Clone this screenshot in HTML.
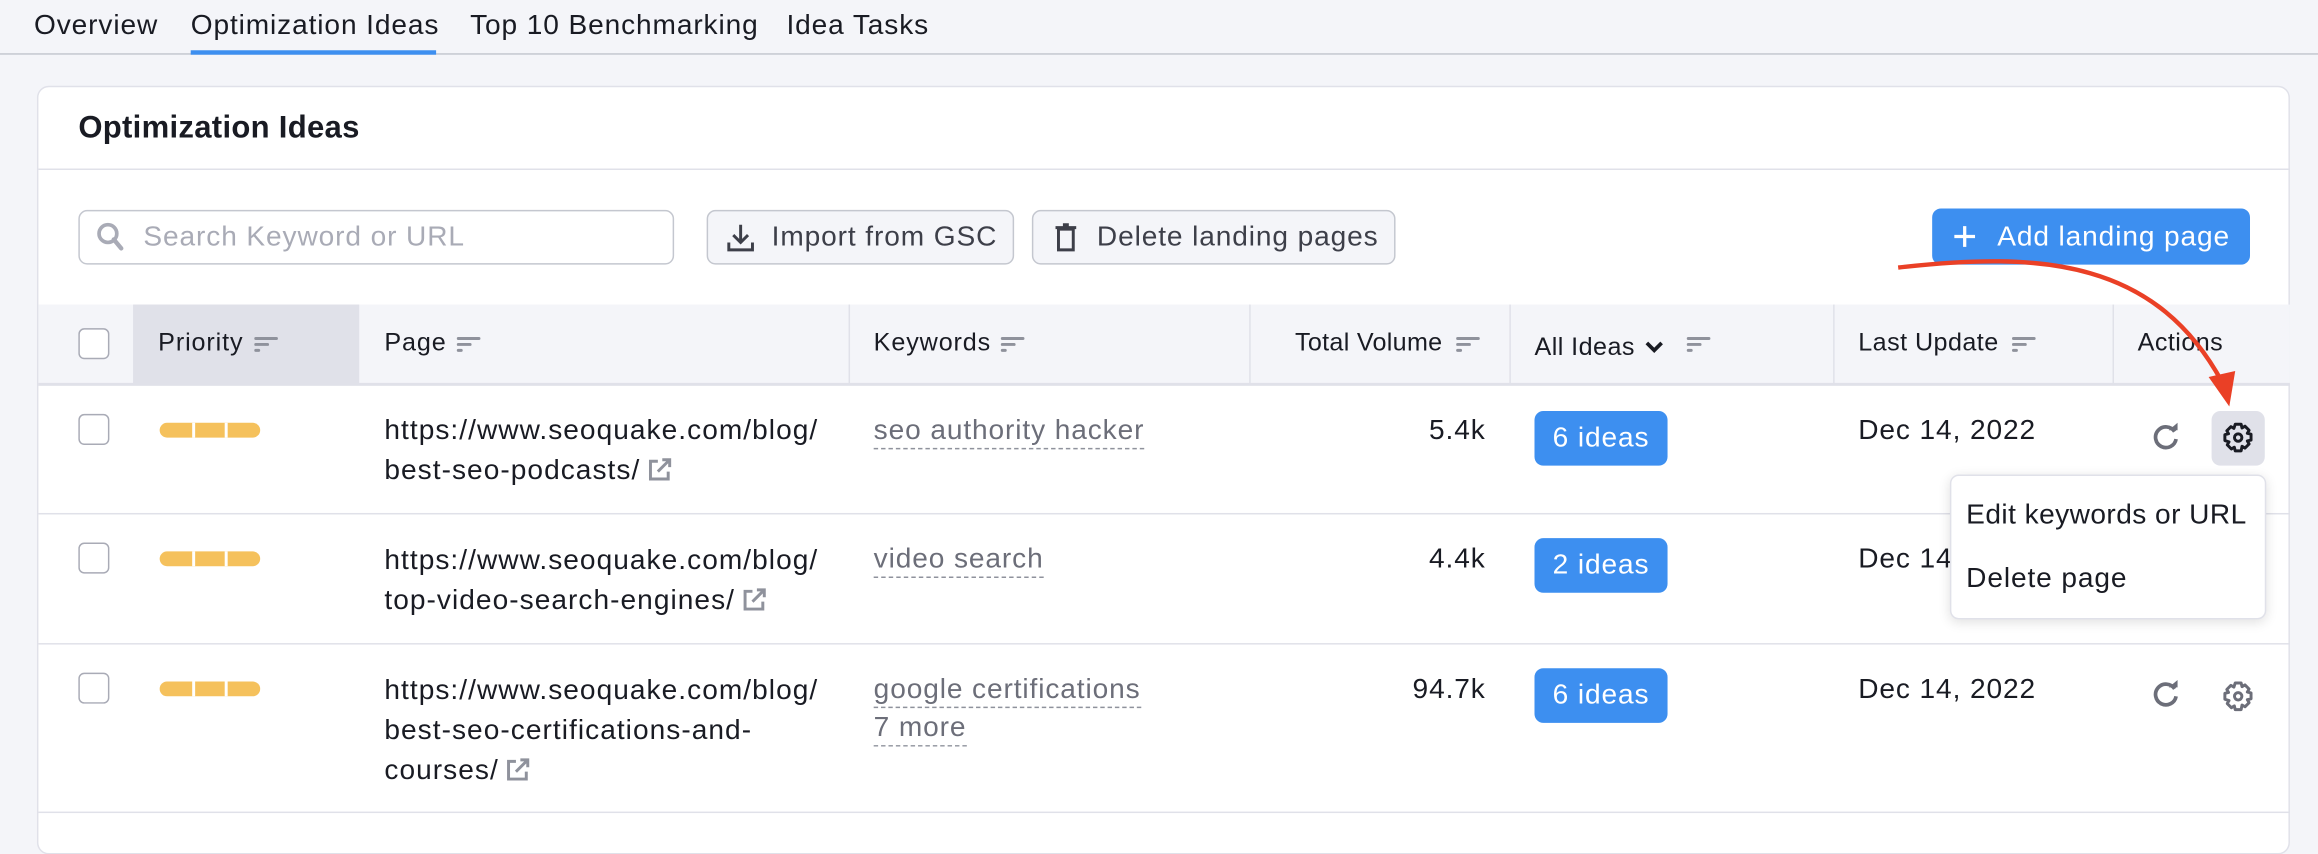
<!DOCTYPE html>
<html><head><meta charset="utf-8"><style>
*{box-sizing:border-box;margin:0;padding:0}
html,body{width:2318px;height:814px;overflow:hidden;background:#f4f5f9}
#w{position:absolute;left:0;top:0;width:1568px;height:551px;transform:scale(1.47832);transform-origin:0 0;font-family:"Liberation Sans",sans-serif;color:#191b23;letter-spacing:0.6px}
.a{position:absolute;white-space:nowrap}
.tab{font-size:19px;top:7px}
.card{position:absolute;left:25px;top:58px;width:1524px;height:520px;background:#fff;border:1px solid #e0e1e9;border-radius:8px}
.btn{position:absolute;top:142px;height:37px;border:1px solid #c4c7cf;border-radius:6px;background:#f4f5f9;font-size:19px;color:#3d3f49;line-height:35px}
.hdr{font-size:17px;top:222px;color:#191b23}
.sort{position:absolute;width:16px;height:12px}
.sort i{display:block;height:2px;background:#8f929c;margin-bottom:2px;border-radius:1px}
.vd{position:absolute;top:206px;width:1px;height:54px;background:#e0e1e9}
.hd{position:absolute;left:26px;width:1523px;height:1px;background:#e0e1e9}
.cb{position:absolute;left:53px;width:21px;height:21px;border:1px solid #a9abb6;border-radius:4px;background:#fff}
.pri{position:absolute;left:108px;width:68px;height:10px;background:#f5c15c;border-radius:5px}
.pri:before,.pri:after{content:"";position:absolute;top:0;width:2px;height:10px;background:#fff}
.pri:before{left:22px}.pri:after{left:44px}
.pg{font-size:19px;line-height:27px;left:260px;letter-spacing:0.7px}
.kw{font-size:19px;color:#6c6e79;left:591px;border-bottom:1px dashed #8f929c;line-height:22px}
.vol{font-size:19px;right:563px}
.badge{position:absolute;left:1038px;width:90px;height:37px;background:#3d8ff0;border-radius:6px;color:#fff;font-size:19px;text-align:center;line-height:37px}
.dt{font-size:19px;left:1257px}
.ext{display:inline-block;vertical-align:-3px;margin-left:4px}
</style></head><body><div id="w">
<div class="a tab" style="left:23px">Overview</div>
<div class="a tab" style="left:129px">Optimization Ideas</div>
<div class="a tab" style="left:318px">Top 10 Benchmarking</div>
<div class="a tab" style="left:532px">Idea Tasks</div>
<div style="position:absolute;left:0;top:36px;width:1568px;height:1px;background:#c4c7cf"></div>
<div style="position:absolute;left:129px;top:34px;width:166px;height:3px;background:#3d8ff0"></div>
<div class="card"></div>
<div class="a" style="left:53px;top:75px;font-size:21px;font-weight:bold;letter-spacing:0.2px">Optimization Ideas</div>
<div class="hd" style="top:114px"></div>
<div style="position:absolute;left:53px;top:142px;width:403px;height:37px;border:1px solid #c4c7cf;border-radius:6px;background:#fff"></div>
<svg class="a" style="left:64px;top:150px" width="22" height="22" viewBox="0 0 22 22"><circle cx="9" cy="8" r="6" fill="none" stroke="#a9abb6" stroke-width="2.5"/><path d="M13 12l5 6" stroke="#a9abb6" stroke-width="3" stroke-linecap="round"/></svg>
<div class="a" style="left:97px;top:150px;font-size:19px;color:#a9abb6">Search Keyword or URL</div>
<div class="btn" style="left:478px;width:208px;padding-left:43px">Import from GSC</div>
<svg class="a" style="left:490px;top:150px" width="22" height="22" viewBox="0 0 22 22"><path d="M11 2v12M6 9l5 5 5-5M3 14v5h16v-5" fill="none" stroke="#3d3f49" stroke-width="2"/></svg>
<div class="btn" style="left:698px;width:246px;padding-left:43px">Delete landing pages</div>
<svg class="a" style="left:710px;top:149px" width="22" height="22" viewBox="0 0 22 22"><path d="M6 6h10v14H6zM4 5h14M9 3h4" fill="none" stroke="#3d3f49" stroke-width="2"/></svg>
<div style="position:absolute;left:1307px;top:141px;width:215px;height:38px;background:#3d8ff0;border-radius:6px;color:#fff;font-size:19px;line-height:39px;padding-left:44px">Add landing page</div>
<svg class="a" style="left:1321px;top:152px" width="16" height="16" viewBox="0 0 16 16"><path d="M8 1v14M1 8h14" stroke="#fff" stroke-width="2.2"/></svg>
<div style="position:absolute;left:26px;top:206px;width:1523px;height:54px;background:#f4f5f9"></div>
<div style="position:absolute;left:90px;top:206px;width:153px;height:54px;background:#e0e1e9"></div>
<div class="hd" style="top:259px;height:2px"></div>
<div class="vd" style="left:574px"></div><div class="vd" style="left:845px"></div><div class="vd" style="left:1021px"></div><div class="vd" style="left:1240px"></div><div class="vd" style="left:1429px"></div>
<div class="cb" style="top:222px"></div>
<div class="a hdr" style="left:107px">Priority</div><div class="sort" style="left:172px;top:228px"><i style="width:16px"></i><i style="width:10px"></i><i style="width:4px"></i></div>
<div class="a hdr" style="left:260px">Page</div><div class="sort" style="left:309px;top:228px"><i style="width:16px"></i><i style="width:10px"></i><i style="width:4px"></i></div>
<div class="a hdr" style="left:591px">Keywords</div><div class="sort" style="left:677px;top:228px"><i style="width:16px"></i><i style="width:10px"></i><i style="width:4px"></i></div>
<div class="a hdr" style="left:876px;letter-spacing:0.2px">Total Volume</div><div class="sort" style="left:985px;top:228px"><i style="width:16px"></i><i style="width:10px"></i><i style="width:4px"></i></div>
<div class="a hdr" style="left:1038px;top:225px;letter-spacing:0.3px">All Ideas</div>
<svg class="a" style="left:1112px;top:230px" width="14" height="10" viewBox="0 0 14 10"><path d="M2 2l5 5 5-5" fill="none" stroke="#191b23" stroke-width="2.5"/></svg>
<div class="sort" style="left:1141px;top:228px"><i style="width:16px"></i><i style="width:10px"></i><i style="width:4px"></i></div>
<div class="a hdr" style="left:1257px;letter-spacing:0.3px">Last Update</div><div class="sort" style="left:1361px;top:228px"><i style="width:16px"></i><i style="width:10px"></i><i style="width:4px"></i></div>
<div class="a hdr" style="left:1446px;letter-spacing:0.3px">Actions</div>

<!-- row1 -->
<div class="cb" style="top:280px"></div><div class="pri" style="top:286px"></div>
<div class="a pg" style="top:278px">https://www.seoquake.com/blog/<br>best-seo-podcasts/<svg class="ext" width="18" height="18" viewBox="0 0 18 18"><path d="M8 3H3v12h12v-5M11 2h5v5M16 2L8 10" fill="none" stroke="#8f929c" stroke-width="2"/></svg></div>
<div class="a kw" style="top:281px">seo authority hacker</div>
<div class="a vol" style="top:281px">5.4k</div>
<div class="badge" style="top:278px">6 ideas</div>
<div class="a dt" style="top:281px">Dec 14, 2022</div>
<div class="hd" style="top:347px"></div>
<!-- row2 -->
<div class="cb" style="top:367px"></div><div class="pri" style="top:373px"></div>
<div class="a pg" style="top:366px">https://www.seoquake.com/blog/<br>top-video-search-engines/<svg class="ext" width="18" height="18" viewBox="0 0 18 18"><path d="M8 3H3v12h12v-5M11 2h5v5M16 2L8 10" fill="none" stroke="#8f929c" stroke-width="2"/></svg></div>
<div class="a kw" style="top:368px">video search</div>
<div class="a vol" style="top:368px">4.4k</div>
<div class="badge" style="top:364px">2 ideas</div>
<div class="a dt" style="top:368px">Dec 14, 2022</div>
<div class="hd" style="top:435px"></div>
<!-- row3 -->
<div class="cb" style="top:455px"></div><div class="pri" style="top:461px"></div>
<div class="a pg" style="top:454px">https://www.seoquake.com/blog/<br>best-seo-certifications-and-<br>courses/<svg class="ext" width="18" height="18" viewBox="0 0 18 18"><path d="M8 3H3v12h12v-5M11 2h5v5M16 2L8 10" fill="none" stroke="#8f929c" stroke-width="2"/></svg></div>
<div class="a kw" style="top:456px">google certifications</div>
<div class="a kw" style="top:482px">7 more</div>
<div class="a vol" style="top:456px">94.7k</div>
<div class="badge" style="top:452px">6 ideas</div>
<div class="a dt" style="top:456px">Dec 14, 2022</div>
<div class="hd" style="top:549px"></div>

<!-- action icons -->
<svg class="a" style="left:1454px;top:285px" width="22" height="22" viewBox="0 0 22 22"><path d="M17 7A7 7 0 1 0 18 12" fill="none" stroke="#6c6e79" stroke-width="2.5"/><path d="M13 6h6V1z" fill="#6c6e79"/></svg>
<div style="position:absolute;left:1496px;top:278px;width:36px;height:37px;background:#e0e1e9;border-radius:6px"></div>
<svg class="a" style="left:1503px;top:285px" width="22" height="22" viewBox="0 0 22 22"><path d="M9 2h4l.6 2.5 2-1.2 2.8 2.8-1.2 2 2.5.6v4l-2.5.6 1.2 2-2.8 2.8-2-1.2L13 20H9l-.6-2.5-2 1.2-2.8-2.8 1.2-2L2 13V9l2.5-.6-1.2-2 2.8-2.8 2 1.2z" fill="none" stroke="#191b23" stroke-width="2" stroke-linejoin="round"/><circle cx="11" cy="11" r="2.5" fill="none" stroke="#191b23" stroke-width="2"/></svg>
<svg class="a" style="left:1454px;top:459px" width="22" height="22" viewBox="0 0 22 22"><path d="M17 7A7 7 0 1 0 18 12" fill="none" stroke="#6c6e79" stroke-width="2.5"/><path d="M13 6h6V1z" fill="#6c6e79"/></svg>
<svg class="a" style="left:1503px;top:460px" width="22" height="22" viewBox="0 0 22 22"><path d="M9 2h4l.6 2.5 2-1.2 2.8 2.8-1.2 2 2.5.6v4l-2.5.6 1.2 2-2.8 2.8-2-1.2L13 20H9l-.6-2.5-2 1.2-2.8-2.8 1.2-2L2 13V9l2.5-.6-1.2-2 2.8-2.8 2 1.2z" fill="none" stroke="#6c6e79" stroke-width="2" stroke-linejoin="round"/><circle cx="11" cy="11" r="2.5" fill="none" stroke="#6c6e79" stroke-width="2"/></svg>

<!-- dropdown -->
<div style="position:absolute;left:1319px;top:321px;width:214px;height:98px;background:#fff;border:1px solid #e0e1e9;border-radius:6px;box-shadow:0 2px 8px rgba(0,0,0,.12)"></div>
<div class="a" style="left:1330px;top:338px;font-size:19px;letter-spacing:0.3px">Edit keywords or URL</div>
<div class="a" style="left:1330px;top:381px;font-size:19px">Delete page</div>

<!-- red arrow -->
<svg class="a" style="left:0;top:0" width="1568" height="551"><path d="M1284 181C1380 170 1460 175 1505 262" fill="none" stroke="#ea4026" stroke-width="3"/><path d="M1494 255l14 20 4-24z" fill="#ea4026"/></svg>
</div></body></html>
